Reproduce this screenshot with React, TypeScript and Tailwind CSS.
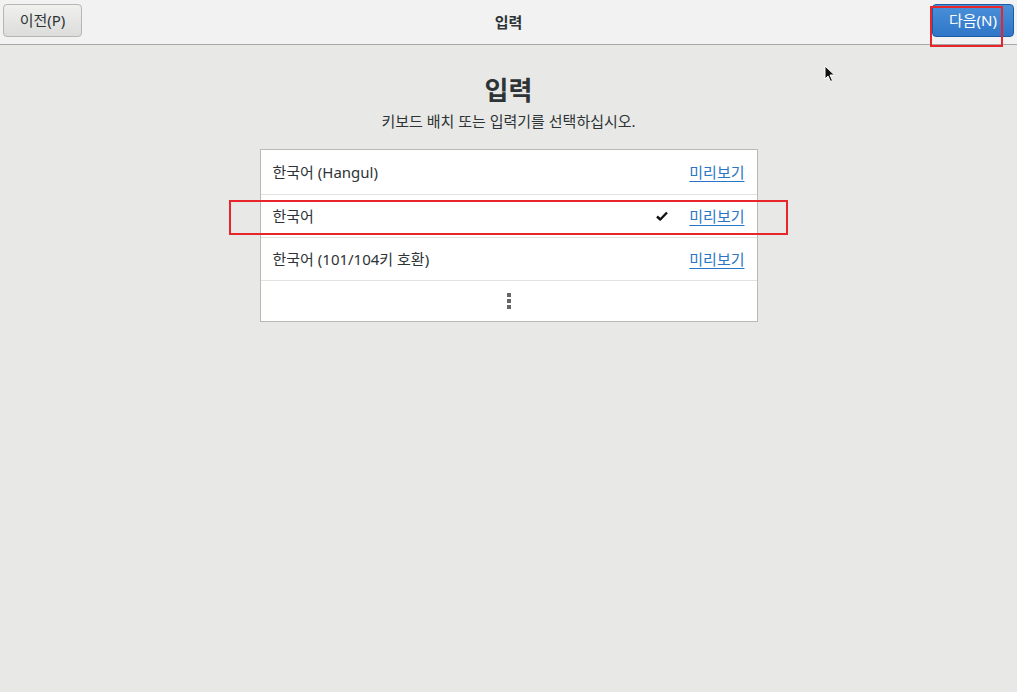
export default function App() {
  const rows = [
    { label: "한국어 (Hangul)", checked: false },
    { label: "한국어", checked: true },
    { label: "한국어 (101/104키 호환)", checked: false },
  ];

  return (
    <div
      className="relative w-[1017px] h-[692px] bg-[#e8e8e7] overflow-hidden text-[#2e3436]"
      style={{ fontFamily: '"Noto Sans", "Noto Sans CJK KR", sans-serif' }}
    >
      {/* Header bar */}
      <div className="h-[45px] bg-[#f2f2f2] border-b border-[#a8a8a6] grid grid-cols-[1fr_auto_1fr] items-start px-[3px] pt-[4px]">
        <div>
          <button className="w-[79px] h-[33px] rounded-[4px] border border-[#b6b6b3] bg-gradient-to-b from-[#f0f0ef] to-[#dcdcda] text-[15px] text-[#2e3436] flex items-center justify-center">
            이전(P)
          </button>
        </div>
        <div className="text-[15px] font-bold pt-[7px]">입력</div>
        <div className="flex justify-end">
          <button className="w-[82px] h-[33px] rounded-[4px] border border-[#1b5ca6] bg-gradient-to-b from-[#4a90d9] to-[#2f76c8] text-[15px] text-white flex items-center justify-center">
            다음(N)
          </button>
        </div>
      </div>

      {/* Content */}
      <div className="flex flex-col items-center">
        <h1 className="mt-[28px] text-[26px] font-bold leading-[34px]">입력</h1>
        <p className="mt-[4px] text-[15px] leading-[20px]">키보드 배치 또는 입력기를 선택하십시오.</p>

        <div className="mt-[18px] w-[498px] bg-white border border-[#b9b9b6]">
          {rows.map((r, i) => (
            <div
              key={i}
              className={`flex items-center pl-[12px] pr-[12px] text-[15px] ${
                i === 0 ? "h-[45px]" : "h-[43px]"
              } border-b border-[#e2e2e0]`}
            >
              <span className="flex-1">{r.label}</span>
              {r.checked && (
                <svg width="12" height="10" viewBox="0 0 12 10" className="mr-[21px]">
                  <path d="M1 5.5 L4.3 8.5 L11 1.5" stroke="#111" strokeWidth="2.4" fill="none" strokeLinejoin="round" />
                </svg>
              )}
              <span className="text-[#2a76c6] underline underline-offset-[3px] decoration-[1px]">미리보기</span>
            </div>
          ))}
          <div className="h-[40px] flex flex-col items-center justify-center gap-[2px]">
            <div className="w-[4px] h-[4px] bg-[#666]" />
            <div className="w-[4px] h-[4px] bg-[#666]" />
            <div className="w-[4px] h-[4px] bg-[#666]" />
          </div>
        </div>
      </div>

      {/* Red annotation boxes */}
      <div className="absolute left-[930px] top-[6px] w-[73px] h-[41px] border-2 border-[#e8252b]" />
      <div className="absolute left-[229px] top-[200px] w-[559px] h-[35px] border-2 border-[#e8252b]" />

      {/* Mouse cursor */}
      <svg className="absolute left-[824px] top-[65px]" width="12" height="18" viewBox="0 0 12 18">
        <path d="M1 1 L1 14 L4 11 L6.5 16.5 L8.5 15.5 L6 10 L10.5 10 Z" fill="#111" stroke="#fff" strokeWidth="1" />
      </svg>
    </div>
  );
}
